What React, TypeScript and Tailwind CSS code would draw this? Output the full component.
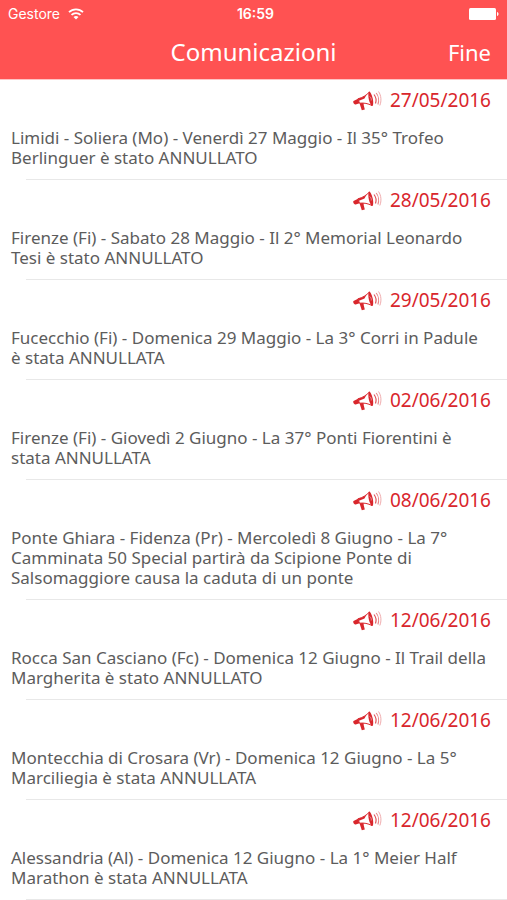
import React from "react";

type Notice = { date: string; text: string };

const notices: Notice[] = [
  { date: "27/05/2016", text: "Limidi - Soliera (Mo) - Venerdì 27 Maggio - Il 35° Trofeo\nBerlinguer è stato ANNULLATO" },
  { date: "28/05/2016", text: "Firenze (Fi) - Sabato 28 Maggio - Il 2° Memorial Leonardo\nTesi è stato ANNULLATO" },
  { date: "29/05/2016", text: "Fucecchio (Fi) - Domenica 29 Maggio - La 3° Corri in Padule\nè stata ANNULLATA" },
  { date: "02/06/2016", text: "Firenze (Fi) - Giovedì 2 Giugno - La 37° Ponti Fiorentini è\nstata ANNULLATA" },
  { date: "08/06/2016", text: "Ponte Ghiara - Fidenza (Pr) - Mercoledì 8 Giugno - La 7°\nCamminata 50 Special partirà da Scipione Ponte di\nSalsomaggiore causa la caduta di un ponte" },
  { date: "12/06/2016", text: "Rocca San Casciano (Fc) - Domenica 12 Giugno - Il Trail della\nMargherita è stato ANNULLATO" },
  { date: "12/06/2016", text: "Montecchia di Crosara (Vr) - Domenica 12 Giugno - La 5°\nMarciliegia è stata ANNULLATA" },
  { date: "12/06/2016", text: "Alessandria (Al) - Domenica 12 Giugno - La 1° Meier Half\nMarathon è stata ANNULLATA" },
];

function Megaphone() {
  return (
    <svg viewBox="0 0 30 24" className="h-6 w-[30px]" aria-hidden="true" fill="none">
      <path d="M1.500 13 6 10.800l1.500 4.400-3.800 1.300c-1.500.3-3.200-2.500-2.200-3.500Z" fill="#d9262c" />
      <path d="M6 10.800C11 9.500 14 7.500 17.500 4L20 17.500c-4-2-8-2.800-12.500-2.300Z" fill="#fff" stroke="#d9262c" strokeWidth="1" />
      <path d="M6 10.800c3.500-.8 6-2 8.500-4l-2 3.700-5.500 2.300Z" fill="#d9262c" />
      <path d="M17 3.500c3 .5 5.500 12 3.500 14.500-3 0-5.500-12-3.500-14.500Z" fill="#d9262c" />
      <path d="M17.800 8.500c1.200 1 1.700 2.700 1.400 4" stroke="#f3b3b5" strokeWidth="0.800" />
      <path d="m7.500 15.200 4-.2.300 2.500 1 4-3 .8-2.300-7.100Z" fill="#d9262c" />
      <path d="M22 6.500c2 2.500 2.500 6 1.500 9" stroke="#e0555a" strokeWidth="1.200" />
      <path d="M24.200 5c2.500 3 3 8 1.700 11.500" stroke="#e88588" strokeWidth="1.100" />
      <path d="M26.500 3.500c2.800 4 3.100 9.500 1.300 14" stroke="#f0abad" strokeWidth="1" />
    </svg>
  );
}

function WifiIcon() {
  return (
    <svg viewBox="0 0 16 12" className="h-3 w-4" aria-hidden="true" fill="none" stroke="#fff" strokeWidth="1.800">
      <path d="M1 4.200a10 10 0 0 1 14 0M3.500 6.900a6.400 6.400 0 0 1 9 0" />
      <path d="M8 11.500 5.500 9.100a3.600 3.600 0 0 1 5 0Z" fill="#fff" stroke="none" />
    </svg>
  );
}

function BatteryIcon() {
  return (
    <svg viewBox="0 0 30 12" className="h-3 w-[30px]" aria-hidden="true" fill="#fff">
      <rect x="0" y="0" width="27" height="12" rx="1.500" />
      <path d="M28 4c2 .3 2 3.700 0 4Z" />
    </svg>
  );
}

export default function App() {
  return (
    <div className="w-full bg-white font-['Noto_Sans','Open_Sans',sans-serif]">
      <header className="border-b border-[#ffc4c4] bg-[#ff5252] text-white">
        <div className="grid h-7 grid-cols-[1fr_auto_1fr] items-center px-2 font-['Inter',sans-serif] text-sm">
          <div className="flex items-center gap-2">
            <span>Gestore</span>
            <WifiIcon />
          </div>
          <span className="pl-1 font-semibold">16:59</span>
          <div className="flex justify-end">
            <BatteryIcon />
          </div>
        </div>
        <div className="grid h-[51px] grid-cols-[1fr_auto_1fr] items-center px-4 pb-1">
          <h1 className="col-start-2 text-2xl leading-8">Comunicazioni</h1>
          <button type="button" className="justify-self-end text-[22px] leading-8">Fine</button>
        </div>
      </header>
      <ul>
        {notices.map((n, i) => (
          <li key={i}>
            <div className="flex h-12 items-start justify-end gap-2 pt-2 pr-4">
              <Megaphone />
              <time className="text-[19px] leading-6 text-[#d9262c]">{n.date}</time>
            </div>
            <p className="pr-1 pb-[11px] pl-[11px] text-[17px] leading-5 whitespace-pre-line text-[#5c5c5c]">{n.text}</p>
            <div className="ml-[26px] h-px bg-[#e8e8e8]" />
          </li>
        ))}
      </ul>
    </div>
  );
}
